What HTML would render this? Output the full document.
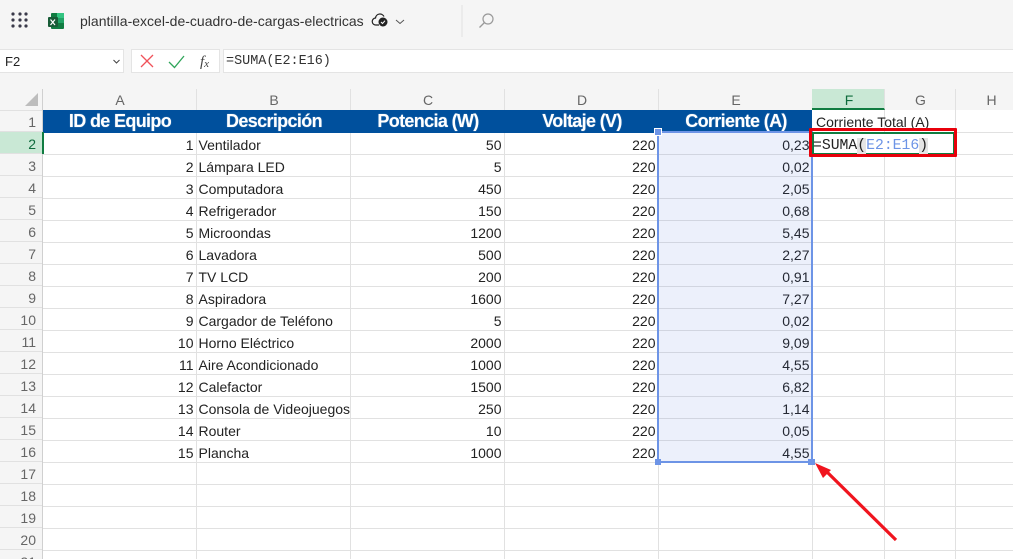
<!DOCTYPE html>
<html style="overflow:hidden;width:1013px;height:559px"><head><meta charset="utf-8"><style>
html,body{margin:0;padding:0}
body{width:1013px;height:559px;overflow:hidden;background:#f5f5f5;position:relative;font-family:"Liberation Sans",sans-serif;color:#222}
#w{position:absolute;left:0;top:0;width:1013px;height:559px;overflow:hidden;background:#f5f5f5}
.a{position:absolute}
table{position:absolute;left:42px;top:110px;border-collapse:collapse;table-layout:fixed;width:1012px;background:#fff}
td{height:22px;padding:0 2px;box-sizing:border-box;border-right:1px solid #e1e1e1;border-bottom:1px solid #e1e1e1;font-size:14px;line-height:17px;white-space:nowrap;overflow:hidden;vertical-align:bottom;color:#222}
td.r{text-align:right}
tr.h td{background:#00509d;color:#fff;font-weight:bold;font-size:18px;text-align:center;border-right:0;border-bottom:0;letter-spacing:-.65px;vertical-align:bottom;line-height:22px;text-shadow:0 0 1px rgba(255,255,255,.5);padding-left:4px}
tr.h td.n{background:#fff;color:#222;font-weight:normal;font-size:14px;text-align:left;letter-spacing:0;border-right:1px solid #e1e1e1;border-bottom:1px solid #e1e1e1;padding-left:4px;vertical-align:bottom;line-height:19px;text-shadow:none}
.cl{position:absolute;top:89px;height:21px;font-size:14px;line-height:22px;text-align:center;color:#666;border-right:1px solid #e1e1e1;box-sizing:border-box;padding-left:2px}
.rl{position:absolute;left:0;width:42px;height:22px;font-size:14px;line-height:24px;text-align:right;padding-right:6px;box-sizing:border-box;color:#666;border-bottom:1px solid #e1e1e1}
.mono{font-family:"Liberation Mono",monospace}
</style></head><body><div id="w">
<svg class="a" style="left:0;top:0" width="1013" height="40">
<g fill="#3a3a4a"><circle cx="13" cy="14" r="1.6"/><circle cx="20" cy="14" r="1.6"/><circle cx="26" cy="14" r="1.6"/><circle cx="13" cy="20" r="1.6"/><circle cx="20" cy="20" r="1.6"/><circle cx="26" cy="20" r="1.6"/><circle cx="13" cy="26" r="1.6"/><circle cx="20" cy="26" r="1.6"/><circle cx="26" cy="26" r="1.6"/></g>
<rect x="51" y="13" width="13" height="16" rx="1" fill="#107c41"/><rect x="57" y="13" width="7" height="5" fill="#33c481"/><rect x="57" y="18" width="7" height="5" fill="#21a366"/><rect x="48" y="17" width="10" height="10" rx="1" fill="#185c37"/>
<path d="M50.5 19.5l4.5 5.5M55 19.5l-4.5 5.5" stroke="#fff" stroke-width="1.2" fill="none"/>
<path d="M379 25h-3a3.5 3.5 0 0 1-.5-7 4.5 4.5 0 0 1 8.5-1.5" fill="none" stroke="#222" stroke-width="1.2"/>
<circle cx="383" cy="22" r="4.5" fill="#222"/><path d="M381 22l1.5 1.5 2.5-2.8" stroke="#fff" stroke-width="1" fill="none"/>
<path d="M396 20l4 3.5 4-3.5" fill="none" stroke="#555" stroke-width="1"/>
<rect x="461" y="5" width="2" height="32" fill="#ebebeb"/>
<circle cx="488" cy="19" r="5" fill="none" stroke="#999" stroke-width="1.2"/><path d="M484.5 22.5l-5 5" stroke="#999" stroke-width="1.3"/>
</svg>
<div class="a" style="left:80px;top:12px;font-size:14px;line-height:18px;color:#333;letter-spacing:.01px;white-space:nowrap">plantilla-excel-de-cuadro-de-cargas-electricas</div>
<div class="a" style="left:0;top:49px;width:124px;height:24px;background:#fff;border:1px solid #e4e4e4;border-left:0;box-sizing:border-box;font-size:13px;line-height:24px;padding-left:5px">F2</div>
<svg class="a" style="left:112px;top:58px" width="10" height="8"><path d="M1.5 2l3 3 3-3" fill="none" stroke="#444" stroke-width="1"/></svg>
<div class="a" style="left:131px;top:49px;width:89px;height:24px;background:#fff;border:1px solid #e4e4e4;box-sizing:border-box"></div>
<svg class="a" style="left:131px;top:49px" width="89" height="24">
<path d="M10 6l12 12M22 6l-12 12" stroke="#f0525a" stroke-width="1.3" fill="none"/>
<path d="M38 13l5.5 5.5L53 7" stroke="#2fa55a" stroke-width="1.3" fill="none"/>
<text x="69" y="17" font-family="Liberation Serif,serif" font-style="italic" font-size="15" fill="#444">f<tspan font-size="11" dy="1">x</tspan></text>
</svg>
<div class="a mono" style="left:223px;top:49px;width:790px;height:24px;background:#fff;border:1px solid #e4e4e4;border-right:0;box-sizing:border-box;font-size:13.45px;line-height:20px;padding-left:2px;padding-top:2px;color:#333">=SUMA(E2:E16)</div>

<svg class="a" style="left:24px;top:92px" width="16" height="15"><path d="M1 14L14 1v13z" fill="#bdbdbd"/></svg>
<div class="cl" style="left:42px;width:155px">A</div>
<div class="cl" style="left:196px;width:155px">B</div>
<div class="cl" style="left:350px;width:155px">C</div>
<div class="cl" style="left:504px;width:155px">D</div>
<div class="cl" style="left:658px;width:155px">E</div>
<div class="cl" style="left:812px;width:73px;background:#c9e8d5;color:#0e6b3c;border-bottom:2px solid #107c41;height:21px">F</div>
<div class="cl" style="left:884px;width:72px">G</div>
<div class="cl" style="left:955px;width:72px">H</div>

<div class="rl" style="top:110px">1</div>
<div class="rl" style="top:132px;background:#c9e8d5;color:#0e6b3c">2</div>
<div class="rl" style="top:154px">3</div>
<div class="rl" style="top:176px">4</div>
<div class="rl" style="top:198px">5</div>
<div class="rl" style="top:220px">6</div>
<div class="rl" style="top:242px">7</div>
<div class="rl" style="top:264px">8</div>
<div class="rl" style="top:286px">9</div>
<div class="rl" style="top:308px">10</div>
<div class="rl" style="top:330px">11</div>
<div class="rl" style="top:352px">12</div>
<div class="rl" style="top:374px">13</div>
<div class="rl" style="top:396px">14</div>
<div class="rl" style="top:418px">15</div>
<div class="rl" style="top:440px">16</div>
<div class="rl" style="top:462px">17</div>
<div class="rl" style="top:484px">18</div>
<div class="rl" style="top:506px">19</div>
<div class="rl" style="top:528px">20</div>
<div class="rl" style="top:550px">21</div>
<div class="a" style="left:0;top:110px;width:42px;height:1px;background:#e1e1e1"></div>

<table>
<colgroup><col style="width:154px"><col style="width:154px"><col style="width:154px"><col style="width:154px"><col style="width:154px"><col style="width:72px"><col style="width:71px"><col style="width:99px"></colgroup>
<tr class="h"><td>ID de Equipo</td><td>Descripción</td><td>Potencia (W)</td><td>Voltaje (V)</td><td>Corriente (A)</td><td class="n" style="overflow:visible">Corriente Total (A)</td><td class="n"></td><td class="n"></td></tr>
<tr><td class="r">1</td><td>Ventilador</td><td class="r">50</td><td class="r">220</td><td class="r">0,23</td><td></td><td></td><td></td></tr>
<tr><td class="r">2</td><td>Lámpara LED</td><td class="r">5</td><td class="r">220</td><td class="r">0,02</td><td></td><td></td><td></td></tr>
<tr><td class="r">3</td><td>Computadora</td><td class="r">450</td><td class="r">220</td><td class="r">2,05</td><td></td><td></td><td></td></tr>
<tr><td class="r">4</td><td>Refrigerador</td><td class="r">150</td><td class="r">220</td><td class="r">0,68</td><td></td><td></td><td></td></tr>
<tr><td class="r">5</td><td>Microondas</td><td class="r">1200</td><td class="r">220</td><td class="r">5,45</td><td></td><td></td><td></td></tr>
<tr><td class="r">6</td><td>Lavadora</td><td class="r">500</td><td class="r">220</td><td class="r">2,27</td><td></td><td></td><td></td></tr>
<tr><td class="r">7</td><td>TV LCD</td><td class="r">200</td><td class="r">220</td><td class="r">0,91</td><td></td><td></td><td></td></tr>
<tr><td class="r">8</td><td>Aspiradora</td><td class="r">1600</td><td class="r">220</td><td class="r">7,27</td><td></td><td></td><td></td></tr>
<tr><td class="r">9</td><td>Cargador de Teléfono</td><td class="r">5</td><td class="r">220</td><td class="r">0,02</td><td></td><td></td><td></td></tr>
<tr><td class="r">10</td><td>Horno Eléctrico</td><td class="r">2000</td><td class="r">220</td><td class="r">9,09</td><td></td><td></td><td></td></tr>
<tr><td class="r">11</td><td>Aire Acondicionado</td><td class="r">1000</td><td class="r">220</td><td class="r">4,55</td><td></td><td></td><td></td></tr>
<tr><td class="r">12</td><td>Calefactor</td><td class="r">1500</td><td class="r">220</td><td class="r">6,82</td><td></td><td></td><td></td></tr>
<tr><td class="r">13</td><td>Consola de Videojuegos</td><td class="r">250</td><td class="r">220</td><td class="r">1,14</td><td></td><td></td><td></td></tr>
<tr><td class="r">14</td><td>Router</td><td class="r">10</td><td class="r">220</td><td class="r">0,05</td><td></td><td></td><td></td></tr>
<tr><td class="r">15</td><td>Plancha</td><td class="r">1000</td><td class="r">220</td><td class="r">4,55</td><td></td><td></td><td></td></tr>
<tr><td></td><td></td><td></td><td></td><td></td><td></td><td></td><td></td></tr>
<tr><td></td><td></td><td></td><td></td><td></td><td></td><td></td><td></td></tr>
<tr><td></td><td></td><td></td><td></td><td></td><td></td><td></td><td></td></tr>
<tr><td></td><td></td><td></td><td></td><td></td><td></td><td></td><td></td></tr>
<tr><td></td><td></td><td></td><td></td><td></td><td></td><td></td><td></td></tr>
</table>

<div class="a" style="left:42px;top:89px;width:1px;height:470px;background:#d0d0d0"></div>
<div class="a" style="left:43px;top:132px;width:769px;height:1px;background:#00509d"></div>
<div class="a" style="left:42px;top:132px;width:2px;height:22px;background:#107c41"></div>
<div class="a" style="left:657px;top:131px;width:156px;height:332px;background:rgba(70,110,220,.1);border:2px solid #6d94e6;box-sizing:border-box"></div>
<div class="a" style="left:655px;top:129px;width:6px;height:6px;background:#6d94e6;border:1px solid #fff;box-sizing:content-box;margin:-1px"></div>
<div class="a" style="left:655px;top:459px;width:6px;height:6px;background:#6d94e6"></div>
<div class="a" style="left:808px;top:459px;width:7px;height:6px;background:#6d94e6"></div>

<div class="a" style="left:812px;top:132px;width:143px;height:23px;background:#fff;border:2px solid #107c41;box-sizing:border-box"></div>
<div class="a mono" style="left:813px;top:137px;font-size:14.75px;line-height:19px;color:#222;white-space:nowrap">=SUMA<span style="background:#e4e4e4">(</span><span style="color:#6d94e6">E2:E16</span><span style="background:#e4e4e4">)</span></div>
<div class="a" style="left:809px;top:128px;width:148px;height:29px;border:3px solid #e8000b;box-sizing:border-box;border-radius:1px"></div>

<svg class="a" style="left:810px;top:460px" width="100" height="90">
<line x1="86" y1="80" x2="16" y2="11" stroke="#f0141e" stroke-width="3.2"/>
<path d="M5 3L21 10 13 18Z" fill="#f0141e"/>
</svg>
</div></body></html>
